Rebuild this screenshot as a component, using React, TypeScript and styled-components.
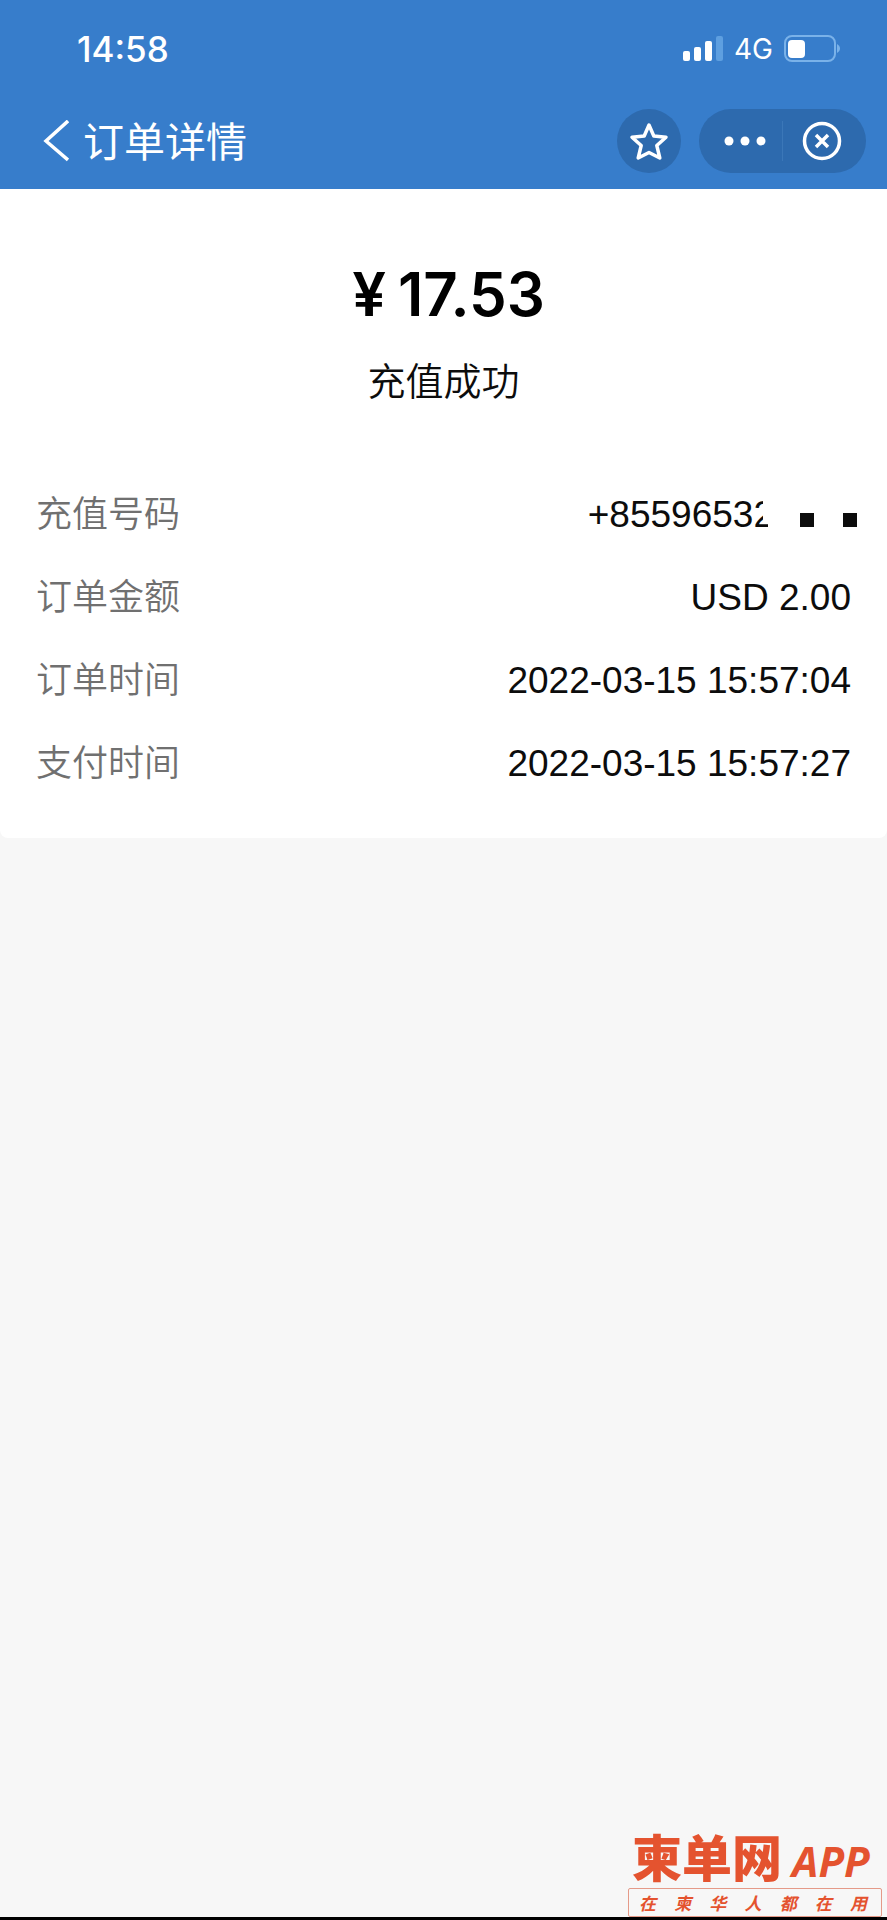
import React from 'react';
import styled, { createGlobalStyle } from 'styled-components';

const GlobalStyle = createGlobalStyle`
  *, *::before, *::after { box-sizing: border-box; }
  body { margin: 0; background: #f7f7f7; }
`;

const cjk = `'Noto Sans CJK SC', sans-serif`;

const Page = styled.div`
  display: flex;
  flex-direction: column;
  min-height: 100vh;
  background: #f7f7f7;
  color: #0c0c0c;
  font-family: 'Liberation Sans', ${cjk};
`;

const Header = styled.header`
  background: #377dcb;
  color: #fff;
`;

const StatusBar = styled.div`
  display: flex;
  align-items: center;
  justify-content: space-between;
  height: 96px;
  padding: 2px 46px 0 77px;
  font-family: Inter, sans-serif;
`;

const Clock = styled.time`
  font-size: 35px;
  font-weight: 500;
  line-height: 40px;
`;

const Indicators = styled.div`
  display: flex;
  align-items: center;
  gap: 11px;
  font-size: 28px;
  line-height: 40px;
`;

const NavBar = styled.div`
  display: flex;
  align-items: center;
  justify-content: space-between;
  height: 93px;
  padding: 0 21px 4px 42px;
`;

const Title = styled.h1`
  margin: 0;
  padding-bottom: 4px;
  font: 400 41px/56px ${cjk};
`;

const Group = styled.div<{ $gap: number }>`
  display: flex;
  align-items: center;
  gap: ${p => p.$gap}px;
`;

const IconButton = styled.button<{ $width: number; $filled?: boolean }>`
  display: flex;
  align-items: center;
  justify-content: center;
  width: ${p => p.$width}px;
  height: 64px;
  padding: 0;
  border: 0;
  border-radius: 32px;
  background: ${p => (p.$filled ? '#2d6aae' : 'transparent')};
  color: inherit;
`;

const Capsule = styled.div`
  display: flex;
  align-items: center;
  height: 64px;
  padding: 0 5px 0 9px;
  border-radius: 32px;
  background: #2d6aae;
`;

const Divider = styled.span`
  width: 1px;
  height: 40px;
  background: #3b77b8;
`;

const Card = styled.main`
  padding-bottom: 35px;
  border-radius: 0 0 8px 8px;
  background: #fff;
`;

const Summary = styled.section`
  display: flex;
  flex-direction: column;
  align-items: center;
  gap: 19px;
  padding: 67px 0 64px;
`;

const Amount = styled.p`
  display: flex;
  gap: 12px;
  margin: 0;
  padding-left: 10px;
  color: #000;
  font: 600 60px/76px Inter, sans-serif;
`;

const Result = styled.p`
  margin: 0;
  font: 350 38px/56px ${cjk};
`;

const Details = styled.dl`
  margin: 0;
  padding: 0 36px;
`;

const Row = styled.div`
  display: flex;
  align-items: baseline;
  justify-content: space-between;
  height: 83px;
  padding-top: 12px;
`;

const Label = styled.dt`
  color: #707070;
  font: 350 36px/56px ${cjk};
`;

const Value = styled.dd`
  display: flex;
  align-items: baseline;
  margin: 0;
  font-size: 37px;
  line-height: 56px;
`;

const Number = styled.span`
  clip-path: polygon(0 0, calc(100% - 11px) 0, calc(100% - 11px) 60%, calc(100% - 6px) 62%, calc(100% - 6px) 100%, 0 100%);
`;

const Redaction = styled.span`
  display: flex;
  gap: 29px;
  margin: 0 -6px 0 26px;
`;

const Block = styled.i`
  width: 14px;
  height: 14px;
  background: #0c0c0c;
`;

const Footer = styled.footer`
  display: flex;
  justify-content: flex-end;
  margin-top: auto;
  padding-right: 5px;
  border-bottom: 3px solid #000;
`;

const Watermark = styled.div`
  width: 254px;
  color: #e4532f;
`;

const Brand = styled.div`
  display: flex;
  align-items: baseline;
  gap: 10px;
  padding: 0 0 3px 4px;
  font: 900 50px/56px ${cjk};
`;

const BrandSuffix = styled.span`
  font: italic 700 42px/48px 'Noto Sans', sans-serif;
`;

const Slogan = styled.div`
  display: flex;
  justify-content: space-between;
  padding: 0 14px 0 10px;
  border: 1px solid #e59a88;
  border-radius: 2px;
  font: italic 700 17px/27px ${cjk};
`;

const details = [
  { label: '订单金额', value: 'USD 2.00' },
  { label: '订单时间', value: '2022-03-15 15:57:04' },
  { label: '支付时间', value: '2022-03-15 15:57:27' },
];

export default function App() {
  return (
    <Page>
      <GlobalStyle />
      <Header>
        <StatusBar>
          <Clock>14:58</Clock>
          <Indicators>
            <svg width="40" height="26" viewBox="0 0 40 26" fill="#fff" aria-hidden="true">
              <rect x="0" y="15" width="7" height="10" rx="2" />
              <rect x="11" y="11" width="7" height="14" rx="2" />
              <rect x="22" y="5" width="7" height="20" rx="2" />
              <rect x="33" y="0" width="7" height="25" rx="2" fill="#5e9fe0" />
            </svg>
            <span>4G</span>
            <svg width="57" height="28" viewBox="0 0 57 28" aria-hidden="true">
              <rect x="1" y="1" width="50" height="25" rx="7" fill="none" stroke="#7ab2e9" strokeWidth="2" />
              <rect x="4" y="5" width="17" height="18" rx="4" fill="#fff" />
              <path d="M53 9c4 2 4 7 0 9z" fill="#7ab2e9" />
            </svg>
          </Indicators>
        </StatusBar>
        <NavBar>
          <Group $gap={14}>
            <IconButton $width={27} aria-label="返回">
              <svg width="27" height="42" viewBox="0 0 27 42" fill="none" stroke="#fff" strokeWidth="3.500" aria-hidden="true">
                <path d="M26 1 4 21l22 19" />
              </svg>
            </IconButton>
            <Title>订单详情</Title>
          </Group>
          <Group $gap={18}>
            <IconButton $width={64} $filled aria-label="收藏">
              <svg width="40" height="40" viewBox="0 0 40 40" fill="none" stroke="#fff" strokeWidth="3.500" strokeLinejoin="round" aria-hidden="true">
                <path d="M20 4l4.800 11 12.200 1.200-9.200 8.300 3 12.500L20 31.500 9.200 37l3-12.500L3 16.200 15.200 15z" />
              </svg>
            </IconButton>
            <Capsule>
              <IconButton $width={74} aria-label="更多">
                <svg width="42" height="10" viewBox="0 0 42 10" fill="#fff" aria-hidden="true">
                  <circle cx="5" cy="5" r="4.500" />
                  <circle cx="21" cy="5" r="4.500" />
                  <circle cx="37" cy="5" r="4.500" />
                </svg>
              </IconButton>
              <Divider />
              <IconButton $width={78} aria-label="关闭">
                <svg width="40" height="40" viewBox="0 0 40 40" fill="none" stroke="#fff" strokeWidth="3.500" aria-hidden="true">
                  <circle cx="20" cy="20" r="17.500" />
                  <path d="M14 14l12 12M26 14L14 26" />
                </svg>
              </IconButton>
            </Capsule>
          </Group>
        </NavBar>
      </Header>
      <Card>
        <Summary>
          <Amount>
            <span>¥</span>
            <span>17.53</span>
          </Amount>
          <Result>充值成功</Result>
        </Summary>
        <Details>
          <Row>
            <Label>充值号码</Label>
            <Value>
              <Number>+85596532</Number>
              <Redaction>
                <Block />
                <Block />
              </Redaction>
            </Value>
          </Row>
          {details.map(d => (
            <Row key={d.label}>
              <Label>{d.label}</Label>
              <Value>{d.value}</Value>
            </Row>
          ))}
        </Details>
      </Card>
      <Footer>
        <Watermark>
          <Brand>
            <span>柬单网</span>
            <BrandSuffix>APP</BrandSuffix>
          </Brand>
          <Slogan>
            {[...'在柬华人都在用'].map((c, i) => (
              <span key={i}>{c}</span>
            ))}
          </Slogan>
        </Watermark>
      </Footer>
    </Page>
  );
}
